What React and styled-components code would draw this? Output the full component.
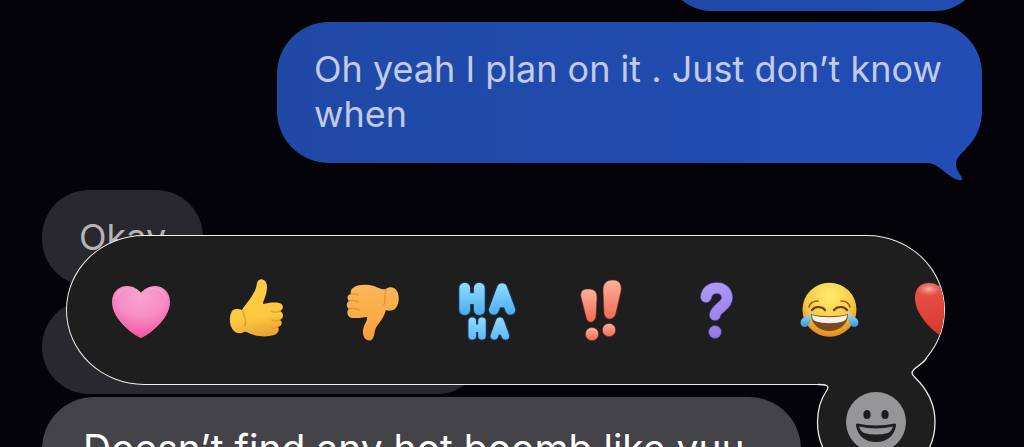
import React, { useState } from 'react';
import styled, { createGlobalStyle, css } from 'styled-components';

const GlobalStyle = createGlobalStyle`
  * {
    box-sizing: border-box;
  }

  body {
    margin: 0;
    background-color: #030308;
    font-family: Inter, 'Liberation Sans', sans-serif;
  }
`;

const Screen = styled.main`
  position: relative;
  height: 100vh;
  overflow: hidden;
`;

// thread is scrolled, so the first bubble is mostly off the top
const Thread = styled.div`
  display: flex;
  flex-direction: column;
  margin-top: -83px;
  padding: 0 42px;
`;

const Bubble = styled.div`
  position: relative;
  flex-shrink: 0;
  min-height: 94px;
  padding: 25px 37px 26px;
  border-radius: 47px;
  font-size: 36px;
  line-height: 45px;
`;

const Sent = styled(Bubble)`
  align-self: flex-end;
  width: ${({ $width }) => $width || 'auto'};
  max-width: 705px;
  margin-bottom: ${({ $gap }) => $gap}px;
  border-radius: ${({ $tall }) => ($tall ? '52px' : '47px')};
  background: linear-gradient(90deg, #2049a6, #214db4);
  color: #c1cbe6;
`;

const Received = styled(Bubble)`
  align-self: flex-start;
  width: ${({ $width }) => $width || 'auto'};
  margin-bottom: ${({ $gap }) => $gap}px;
  background-color: #28282d;
  color: #b4b4b8;

  ${({ $active }) =>
    $active &&
    css`
      max-width: 760px;
      padding: 28px 56px 28px 41px;
      border-radius: 56px;
      background-color: #444348;
      color: #ffffff;
      font-size: 39px;
      line-height: 48px;
    `}
`;

const BubbleTail = styled.svg`
  position: absolute;
  right: 5px;
  bottom: -18px;
`;

const Picker = styled.section`
  position: absolute;
  top: 235px;
  left: 66px;
  right: 79px;
`;

const ReactionBar = styled.div`
  display: flex;
  height: 150px;
  padding-left: 17px;
  overflow: hidden;
  border: 1px solid #ececec;
  border-radius: 78px / 75px;
  background-color: #1e1e1f;
`;

const Reaction = styled.button`
  display: flex;
  flex: 0 0 115px;
  align-items: center;
  justify-content: center;
  padding: 0;
  border: none;
  background: none;
  cursor: pointer;
`;

const MoreHolder = styled.div`
  position: absolute;
  top: 120px;
  right: -1px;
  width: 140px;
  height: 130px;
`;

const MoreButton = styled.button`
  position: absolute;
  top: 36px;
  left: 39px;
  width: 62px;
  height: 62px;
  padding: 0;
  border: none;
  background: none;
  cursor: pointer;
`;

const Icon = ({ children }) => (
  <svg width='64' height='64' viewBox='0 0 64 64' aria-hidden='true'>
    {children}
  </svg>
);

const PinkHeart = () => (
  <Icon>
    <defs>
      <radialGradient id='pink' cx='0.5' cy='0.2' r='0.8'>
        <stop offset='0' stopColor='#f5a6d0' />
        <stop offset='0.5' stopColor='#f78cc4' />
        <stop offset='1' stopColor='#f5519f' />
      </radialGradient>
    </defs>
    <path
      d='M31 60C25 58 2 42 2 24C2 14 9 8 17 8C24 8 29 12 31 15C33 12 38 8 45 8C53 8 60 14 60 24C60 42 37 58 31 60Z'
      fill='url(#pink)'
    />
    <path
      d='M6 20C8 13 14 10 19 11M41 11C48 10 54 13 56 20'
      fill='none'
      stroke='#f8b9da'
      strokeWidth='2'
      strokeLinecap='round'
      opacity='0.4'
    />
  </Icon>
);

const ThumbUp = () => (
  <Icon>
    <defs>
      <linearGradient id='thumbUp' x1='0.4' y1='0' x2='0.6' y2='1'>
        <stop offset='0' stopColor='#fdcb42' />
        <stop offset='0.65' stopColor='#fdc940' />
        <stop offset='1' stopColor='#eca132' />
      </linearGradient>
    </defs>
    <path
      d='M32 5C33 1 37 0 40 3C43 6 42 12 41 16C40 20 38 23 38 26C43 25 49 24 54 25C59 26 59 31 55 33C59 35 59 40 55 42C58 44 57 48 53 49C55 52 53 56 49 57C43 59 34 59 26 56C23 55 21 53 19 54C16 56 11 56 8 52C4 47 4 38 7 33C10 30 14 31 17 32C20 27 22 25 25 21C28 16 31 13 32 5Z'
      fill='url(#thumbUp)'
    />
    <path
      d='M18 33C19 39 22 41 20 48M55 33C51 35 48 34 46 33M55 42C51 44 49 43 47 42M53 49C50 51 48 50 47 50'
      fill='none'
      stroke='#d98a26'
      strokeWidth='1.5'
      strokeLinecap='round'
      opacity='0.6'
    />
  </Icon>
);

const ThumbDown = () => (
  <Icon>
    <defs>
      <linearGradient id='thumbDown' x1='0.4' y1='0' x2='0.5' y2='1'>
        <stop offset='0' stopColor='#fbb659' />
        <stop offset='0.6' stopColor='#fcab48' />
        <stop offset='1' stopColor='#f69a3b' />
      </linearGradient>
    </defs>
    <path
      d='M13 10C17 6 27 6 34 8C39 10 42 12 46 11C49 8 55 9 57 13C60 19 59 27 55 31C52 33 48 33 46 32C44 39 40 44 37 48C34 52 35 57 33 60C31 64 26 63 24 59C22 54 23 49 26 44C27 42 27 41 27 39C21 40 16 40 12 40C7 39 6 33 9 31C6 29 6 25 9 23C6 20 8 16 11 16C10 14 11 11 13 10Z'
      fill='url(#thumbDown)'
    />
    <path
      d='M11 16C14 15 16 16 18 17M9 23C13 21 16 23 18 24M9 31C13 29 16 31 19 32M46 12C44 17 46 22 44 27'
      fill='none'
      stroke='#d57f2b'
      strokeWidth='1.5'
      strokeLinecap='round'
      opacity='0.55'
    />
  </Icon>
);

// thin letters with a fat round stroke, so they look like balloons
const Balloon = styled.text`
  font-family: Inter, sans-serif;
  font-weight: 100;
  text-anchor: middle;
  stroke-linejoin: round;
  stroke-linecap: round;
  filter: drop-shadow(0 0 1px #1b62ab);
`;

const Haha = () => (
  <Icon>
    <defs>
      <linearGradient
        id='haha'
        gradientUnits='userSpaceOnUse'
        x1='0'
        y1='5'
        x2='0'
        y2='38'
        spreadMethod='repeat'
      >
        <stop offset='0' stopColor='#92defb' />
        <stop offset='1' stopColor='#48aaf5' />
      </linearGradient>
    </defs>
    <g fill='url(#haha)' stroke='url(#haha)'>
      <Balloon x='17' y='32' fontSize='30' strokeWidth='10'>
        H
      </Balloon>
      <Balloon x='47' y='32' fontSize='30' strokeWidth='9'>
        A
      </Balloon>
      <Balloon x='22' y='58' fontSize='20' strokeWidth='7'>
        H
      </Balloon>
      <Balloon x='45' y='58' fontSize='20' strokeWidth='7'>
        A
      </Balloon>
    </g>
  </Icon>
);

const Emphasis = () => (
  <Icon>
    <defs>
      <linearGradient id='bang' x1='0' y1='0' x2='0' y2='1'>
        <stop offset='0' stopColor='#fbb29c' />
        <stop offset='1' stopColor='#f36b53' />
      </linearGradient>
    </defs>
    <g fill='url(#bang)' stroke='#79291f' strokeWidth='0.6'>
      <path d='M11 19C10 13 13 11 18 11C24 11 27 13 27 20L26 38C25 46 17 46 16 39Z' />
      <path d='M33 12C33 5 37 2 43 2C49 2 52 6 51 13L46 35C44 43 35 43 34 35Z' />
      <circle cx='22' cy='56' r='6.6' />
      <circle cx='39' cy='52' r='6.6' />
    </g>
  </Icon>
);

const Question = () => (
  <Icon>
    <defs>
      <linearGradient
        id='question'
        gradientUnits='userSpaceOnUse'
        x1='20'
        y1='4'
        x2='36'
        y2='60'
      >
        <stop offset='0' stopColor='#b09cf5' />
        <stop offset='1' stopColor='#9278e8' />
      </linearGradient>
    </defs>
    <g fill='none' strokeLinecap='round'>
      <path
        d='M21 19C22 13 26 10 32 10C38 10 42 14 42 20C42 28 31 30 30 37'
        stroke='#4a3a93'
        strokeWidth='12'
      />
      <path
        d='M21 19C22 13 26 10 32 10C38 10 42 14 42 20C42 28 31 30 30 37'
        stroke='url(#question)'
        strokeWidth='10.6'
      />
    </g>
    <circle
      cx='30'
      cy='54'
      r='6.4'
      fill='url(#question)'
      stroke='#4a3a93'
      strokeWidth='0.6'
    />
  </Icon>
);

const Joy = () => (
  <Icon>
    <defs>
      <radialGradient id='joy' cx='0.5' cy='0.25' r='0.78'>
        <stop offset='0' stopColor='#fdec70' />
        <stop offset='0.55' stopColor='#f8cc48' />
        <stop offset='1' stopColor='#dd8420' />
      </radialGradient>
      <linearGradient id='tear' x1='0' y1='0' x2='0' y2='1'>
        <stop offset='0' stopColor='#a6e2f7' />
        <stop offset='1' stopColor='#3596d6' />
      </linearGradient>
    </defs>
    <circle cx='29.5' cy='31.7' r='27' fill='url(#joy)' />
    <path
      d='M11 36C20 39 39 39 48 36C48 46 40 53 29.5 53C19 53 11 46 11 36Z'
      fill='#7a4a1c'
    />
    <path
      d='M12 37C21 40 38 40 47 37C47 40 46 42 44 43C36 46 23 46 15 43C13 42 12 40 12 37Z'
      fill='#f6f3ee'
    />
    <path
      d='M12 32C15 28 22 28 25 32M34 32C37 28 44 28 47 32'
      fill='none'
      stroke='#6e3c12'
      strokeWidth='2.2'
      strokeLinecap='round'
    />
    <path
      d='M9 29C10 25 14 23 18 23M41 23C45 23 49 25 50 29'
      fill='none'
      stroke='#93591c'
      strokeWidth='1.6'
      strokeLinecap='round'
    />
    <path
      d='M11 34C11 40 10 49 5 49C0 49 -1 43 3 40C6 38 9 37 11 34ZM48 34C48 40 49 49 54 49C59 49 60 43 56 40C53 38 50 37 48 34Z'
      fill='url(#tear)'
    />
  </Icon>
);

const RedHeart = () => (
  <Icon>
    <defs>
      <linearGradient id='red' x1='0.2' y1='0' x2='0.4' y2='1'>
        <stop offset='0' stopColor='#e8554c' />
        <stop offset='1' stopColor='#d8352c' />
      </linearGradient>
      <radialGradient id='shine'>
        <stop offset='0' stopColor='#f9c0b5' stopOpacity='0.9' />
        <stop offset='1' stopColor='#f08a7e' stopOpacity='0' />
      </radialGradient>
    </defs>
    <path
      d='M30 61C22 56 0 39 0 20C0 10 6 5 14 5C21 5 27 9 30 14C33 9 38 5 45 5C53 5 59 10 59 20C59 40 37 56 30 61Z'
      fill='url(#red)'
    />
    <ellipse cx='14' cy='11' rx='12' ry='7' fill='url(#shine)' />
  </Icon>
);

const GreySmile = () => (
  <svg width='62' height='62' viewBox='0 0 62 62' aria-hidden='true'>
    <circle cx='31' cy='31' r='30' fill='#969699' />
    <ellipse cx='22' cy='23.5' rx='3.6' ry='4.5' fill='#1e1e1f' />
    <ellipse cx='40' cy='23.5' rx='3.6' ry='4.5' fill='#1e1e1f' />
    <path
      d='M12.5 32.5C23 35 39 35 49.5 32.5Q51.5 32.5 51 35C49 45 42 51 31 51C20 51 13 45 11 35Q10.5 32.5 12.5 32.5Z'
      fill='#1e1e1f'
    />
    <path
      d='M14 35.5C25 38 37 38 48 35.5C47 39 45 41 43 42C35 44 27 44 19 42C17 41 15 39 14 35.5Z'
      fill='#969699'
    />
  </svg>
);

const reactions = [
  { label: 'Heart', Glyph: PinkHeart },
  { label: 'Thumbs up', Glyph: ThumbUp },
  { label: 'Thumbs down', Glyph: ThumbDown },
  { label: 'Haha', Glyph: Haha },
  { label: 'Emphasize', Glyph: Emphasis },
  { label: 'Question', Glyph: Question },
  { label: 'Tears of joy', Glyph: Joy },
  { label: 'Red heart', Glyph: RedHeart },
];

const morePath =
  'M12 29.5C19 29.5 24 30 21 35C14 45 11.5 56 11.5 67C11.5 100 37 126 70 126C103 126 129 100 129 67C129 48 121 34 109 22.5C105 19 105 17 109 13.5C113 10.5 117 8 121 3';

function ReactionPicker() {
  const [picked, setPicked] = useState(null);

  return (
    <Picker aria-label='Reactions'>
      <ReactionBar>
        {reactions.map(({ label, Glyph }) => (
          <Reaction
            key={label}
            type='button'
            aria-label={label}
            aria-pressed={picked === label}
            onClick={() => setPicked(label)}
          >
            <Glyph />
          </Reaction>
        ))}
      </ReactionBar>
      <MoreHolder>
        <svg width='140' height='130' viewBox='0 0 140 130' aria-hidden='true'>
          <path d={`${morePath}Z`} fill='#1e1e1f' />
          <path d={morePath} fill='none' stroke='#ececec' strokeWidth='1.3' />
        </svg>
        <MoreButton type='button' aria-label='More emoji'>
          <GreySmile />
        </MoreButton>
      </MoreHolder>
    </Picker>
  );
}

function App() {
  return (
    <Screen>
      <GlobalStyle />
      <Thread>
        <Sent $width='317px' $gap={11} />
        <Sent $tall $gap={27}>
          Oh yeah I plan on it . Just don’t know when
          <BubbleTail width='50' height='44' viewBox='0 0 50 44' aria-hidden='true'>
            <path
              d='M0 26C6 26 10 29 13 31C19 36 26 42 32 43C35 44 36 42 34 39C31 35 29 31 29 27C29 21 34 17 39 12L20 6Z'
              fill='#214db4'
            />
          </BubbleTail>
        </Sent>
        <Received $gap={14}>Okay</Received>
        <Received $width='442px' $gap={3} />
        <Received $active>Doesn’t find any hot boomb like yuu</Received>
      </Thread>
      <ReactionPicker />
    </Screen>
  );
}

export default App;
